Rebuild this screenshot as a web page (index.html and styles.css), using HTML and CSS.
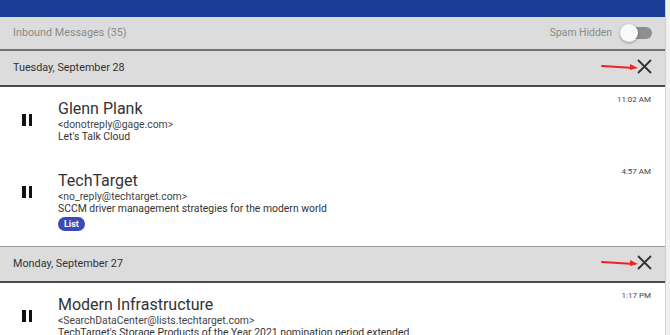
FILE: index.html
```html
<!DOCTYPE html>
<html>
<head>
<meta charset="utf-8">
<link rel="stylesheet" href="styles.css">
</head>
<body>
<div class="page">
  <div class="main">
    <div class="topbar"></div>
    <div class="inbound">
      <span class="inbound-title">Inbound Messages (35)</span>
      <div class="spam">
        <span>Spam Hidden</span>
        <span class="toggle"><span class="thumb"></span></span>
      </div>
    </div>
    <div class="day">
      <span class="day-title">Tuesday, September 28</span>
      <span class="close">
        <svg width="54" height="18" viewBox="0 0 54 18">
          <line x1="2" y1="8" x2="34" y2="10" stroke="#e8262a" stroke-width="2" stroke-linecap="round"/>
          <path d="M30 6 L38 10 L30 12 Z" fill="#e8262a"/>
          <path d="M38 2 L51 15 M51 2 L38 15" stroke="#333" stroke-width="1.8"/>
        </svg>
      </span>
    </div>
    <div class="msg">
      <div class="pause"><i></i><i></i></div>
      <div class="body">
        <div class="name">Glenn Plank</div>
        <div class="email">&lt;donotreply@gage.com&gt;</div>
        <div class="subject">Let's Talk Cloud</div>
      </div>
      <div class="time">11:02 AM</div>
    </div>
    <div class="msg">
      <div class="pause"><i></i><i></i></div>
      <div class="body">
        <div class="name">TechTarget</div>
        <div class="email">&lt;no_reply@techtarget.com&gt;</div>
        <div class="subject">SCCM driver management strategies for the modern world</div>
        <span class="badge">List</span>
      </div>
      <div class="time">4:57 AM</div>
    </div>
    <div class="day day2">
      <span class="day-title">Monday, September 27</span>
      <span class="close">
        <svg width="54" height="18" viewBox="0 0 54 18">
          <line x1="2" y1="8" x2="34" y2="10" stroke="#e8262a" stroke-width="2" stroke-linecap="round"/>
          <path d="M30 6 L38 10 L30 12 Z" fill="#e8262a"/>
          <path d="M38 2 L51 15 M51 2 L38 15" stroke="#333" stroke-width="1.8"/>
        </svg>
      </span>
    </div>
    <div class="msg">
      <div class="pause"><i></i><i></i></div>
      <div class="body">
        <div class="name">Modern Infrastructure</div>
        <div class="email">&lt;SearchDataCenter@lists.techtarget.com&gt;</div>
        <div class="subject">TechTarget's Storage Products of the Year 2021 nomination period extended</div>
      </div>
      <div class="time">1:17 PM</div>
    </div>
  </div>
  <div class="scroll"></div>
</div>
</body>
</html>
```

FILE: styles.css
```css
html, body {
  margin: 0;
  padding: 0;
  height: 335px;
  overflow: hidden;
  background: #fff;
  font-family: Roboto, "Liberation Sans", sans-serif;
}
.page {
  display: flex;
  height: 335px;
  overflow: hidden;
}
.main {
  flex: 1;
  min-width: 0;
}
.scroll {
  width: 4px;
  border-left: 1px solid #d0d0d0;
  background: #f1f1f1;
}
.topbar {
  height: 17px;
  background: #1a3e97;
}
.inbound {
  height: 31px;
  padding: 0 13px 1px;
  background: #dcdcdc;
  display: flex;
  align-items: center;
  justify-content: space-between;
  font-size: 10.8px;
  color: #8a8a8a;
  border-bottom: 2px solid #707070;
}
.spam {
  display: flex;
  align-items: center;
  gap: 12px;
  font-size: 10.4px;
}
.toggle {
  position: relative;
  width: 28px;
  height: 12px;
  border-radius: 6px;
  background: #8e8e8e;
}
.thumb {
  position: absolute;
  left: -4px;
  top: -3px;
  width: 18px;
  height: 18px;
  border-radius: 50%;
  background: #fafafa;
  box-shadow: 0 1px 3px rgba(0,0,0,0.35);
}
.day {
  height: 33px;
  padding: 0 13px 1px;
  background: #dcdcdc;
  display: flex;
  align-items: center;
  justify-content: space-between;
  font-size: 10.8px;
  color: #333;
  border-bottom: 2px solid #4a4a4a;
}
.day2 {
  border-top: 1px solid #9a9a9a;
}
.close {
  display: flex;
  margin-right: -2px;
  margin-top: -1px;
}
.msg {
  display: flex;
  align-items: flex-start;
  padding: 8px 13px 0 22px;
  height: 64px;
}
.msg + .msg {
  height: 79px;
}
.pause {
  display: flex;
  gap: 3px;
  width: 36px;
  margin-top: 19px;
}
.pause i {
  width: 3.5px;
  height: 12px;
  background: #111;
}
.body {
  flex: 1;
  min-width: 0;
  padding-top: 3px;
  white-space: nowrap;
}
.name {
  font-size: 16px;
  line-height: 21px;
  color: #333;
}
.email, .subject {
  font-size: 10.4px;
  line-height: 12px;
  color: #444;
}
.subject {
  color: #333;
}
.badge {
  display: block;
  width: fit-content;
  margin-top: 2px;
  background: #3b4ab5;
  color: #fff;
  font-size: 9px;
  font-weight: bold;
  padding: 2px 6px;
  border-radius: 8px;
  line-height: 10px;
}
.time {
  font-size: 8px;
  line-height: 11px;
  color: #444;
  margin-top: -1px;
  padding-right: 1px;
}
```
